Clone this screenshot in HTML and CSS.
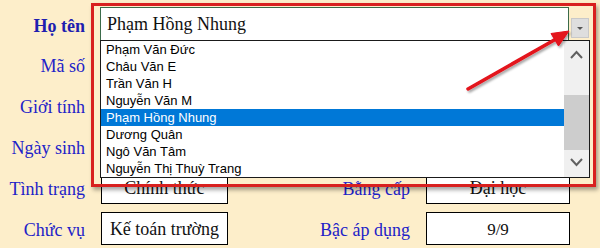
FILE: index.html
```html
<!doctype html>
<html lang="vi">
  <head>
    <meta charset="utf-8">
    <meta name="viewport" content="width=device-width, initial-scale=1">
    <title>Hồ sơ nhân viên</title>
    <link rel="stylesheet" href="styles.css">
  </head>
  <body>
    <div class="sheet">
      <div class="form">
        <div class="row row-name">
          <span class="label label-bold">Họ tên</span>
          <div class="combo">Phạm Hồng Nhung</div>
          <span class="combo-btn"><span class="tri"></span></span>
        </div>
        <div class="row">
          <span class="label">Mã số</span>
        </div>
        <div class="row">
          <span class="label">Giới tính</span>
        </div>
        <div class="row">
          <span class="label">Ngày sinh</span>
        </div>
        <div class="row">
          <span class="label">Tình trạng</span>
          <div class="box">Chính thức</div>
          <span class="label">Bằng cấp</span>
          <div class="box">Đại học</div>
        </div>
        <div class="row">
          <span class="label">Chức vụ</span>
          <div class="box">Kế toán trường</div>
          <span class="label">Bậc áp dụng</span>
          <div class="box box-small">9/9</div>
        </div>
      </div>

      <div class="dropdown">
        <ul class="options">
          <li>Phạm Văn Đức</li>
          <li>Châu Văn E</li>
          <li>Trần Văn H</li>
          <li>Nguyễn Văn M</li>
          <li class="selected">Phạm Hồng Nhung</li>
          <li>Dương Quân</li>
          <li>Ngô Văn Tâm</li>
          <li>Nguyễn Thị Thuỳ Trang</li>
        </ul>
        <div class="scrollbar">
          <svg class="chev" width="25" height="28" viewBox="0 0 25 28">
            <polyline points="7,17 12.5,11 18,17" fill="none" stroke="#606060" stroke-width="2"/>
          </svg>
          <div class="track"><div class="thumb"></div></div>
          <svg class="chev" width="25" height="28" viewBox="0 0 25 28">
            <polyline points="7,10 12.5,16 18,10" fill="none" stroke="#606060" stroke-width="2"/>
          </svg>
        </div>
      </div>

      <div class="callout"></div>
      <svg class="arrow" width="600" height="248" viewBox="0 0 600 248">
        <defs>
          <filter id="shadow" x="-20%" y="-20%" width="140%" height="140%">
            <feDropShadow dx="1.5" dy="2" stdDeviation="1.2" flood-color="#000" flood-opacity="0.35"/>
          </filter>
        </defs>
        <g filter="url(#shadow)" fill="#e3121b" stroke="#e3121b">
          <line x1="468" y1="89" x2="556" y2="39" stroke-width="3.5" stroke-linecap="round"/>
          <polygon points="569,31 551,33.5 558.5,46" stroke-width="1" stroke-linejoin="round"/>
        </g>
      </svg>
    </div>
  </body>
</html>
```

FILE: styles.css
```css
body {
  margin: 0;
  background: #fdeeca;
}
.sheet {
  position: relative;
  width: 600px;
  height: 248px;
  overflow: hidden;
}
.form {
  display: flex;
  flex-direction: column;
  gap: 8px;
  padding-top: 7px;
}
.row {
  display: grid;
  grid-template-columns: 85px 127px 166px 144px;
  column-gap: 16px;
  height: 33px;
  align-items: center;
}
.label {
  font-family: "Liberation Serif", "Times New Roman", serif;
  font-size: 18px;
  color: #2222c8;
  text-align: right;
  padding-top: 3px;
  white-space: nowrap;
}
.label-bold {
  font-weight: bold;
  color: #1e1eb0;
  padding-top: 5px;
}
.box {
  height: 100%;
  box-sizing: border-box;
  border: 1px solid #000;
  background: #fff;
  display: flex;
  align-items: center;
  justify-content: center;
  padding-top: 2px;
  font-family: "Liberation Serif", "Times New Roman", serif;
  font-size: 18px;
  color: #111;
}
.box-small {
  font-size: 17px;
}
.row-name {
  grid-template-columns: 85px 469px 18px;
  column-gap: 15px;
}
.row-name .combo-btn {
  margin-left: -13px;
}
.combo {
  height: 100%;
  box-sizing: border-box;
  border: 1px solid #3b6b4a;
  border-bottom: none;
  background: #fff;
  padding: 6px 0 0 6px;
  font-family: "Liberation Serif", "Times New Roman", serif;
  font-size: 18px;
  color: #111;
}
.combo-btn {
  align-self: end;
  margin-bottom: 2px;
  width: 18px;
  height: 20px;
  box-sizing: border-box;
  background: #dedede;
  border: 1px solid #c9c9c9;
  display: flex;
  align-items: center;
  justify-content: center;
}
.tri {
  width: 0;
  height: 0;
  border-left: 3px solid transparent;
  border-right: 3px solid transparent;
  border-top: 3px solid #555;
}
.dropdown {
  position: absolute;
  left: 100px;
  top: 40px;
  width: 490px;
  height: 138px;
  box-sizing: border-box;
  border: 1px solid #1a1a1a;
  background: #fff;
  display: flex;
}
.options {
  list-style: none;
  margin: 0;
  padding: 0;
  flex: 1;
  font-family: "Liberation Sans", Tahoma, Arial, sans-serif;
  font-size: 13px;
  color: #000;
}
.options li {
  height: 17px;
  line-height: 17px;
  padding-left: 5px;
  white-space: nowrap;
}
.options li.selected {
  background: #0078d7;
  color: #fff;
}
.scrollbar {
  width: 25px;
  background: #f0f0f0;
  display: flex;
  flex-direction: column;
}
.chev {
  display: block;
  flex: none;
}
.track {
  flex: 1;
  position: relative;
}
.thumb {
  position: absolute;
  left: 0;
  right: 0;
  top: 26px;
  height: 55px;
  background: #cdcdcd;
}
.callout {
  position: absolute;
  left: 91px;
  top: 3px;
  width: 505px;
  height: 184px;
  box-sizing: border-box;
  border: 3px solid #d8201f;
  box-shadow: 2px 3px 4px rgba(0, 0, 0, 0.35);
  pointer-events: none;
}
.arrow {
  position: absolute;
  left: 0;
  top: 0;
  pointer-events: none;
}
```
